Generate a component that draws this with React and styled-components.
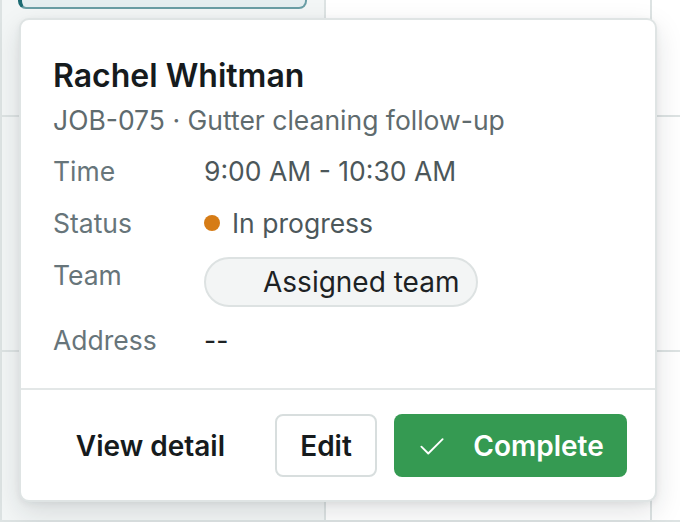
import React from "react";
import styled, { createGlobalStyle } from "styled-components";

const GlobalStyle = createGlobalStyle`
  html, body {
    margin: 0;
    padding: 0;
    background: #ffffff;
    font-family: Inter, "Noto Sans", sans-serif;
    -webkit-font-smoothing: antialiased;
  }
  * {
    box-sizing: border-box;
  }
`;

const job = {
  customer: "Rachel Whitman",
  code: "JOB-075",
  title: "Gutter cleaning follow-up",
  time: "9:00 AM - 10:30 AM",
  status: "In progress",
  team: "Assigned team",
  address: "--",
};

export default function App() {
  return (
    <>
      <GlobalStyle />
      <Stage>
        <CalendarGrid>
          <DayCell $tinted>
            <EventChip />
          </DayCell>
          <DayCell />
          <DayCell $last />
          <DayCell $tinted />
          <DayCell />
          <DayCell $last />
          <DayCell $tinted />
          <DayCell />
          <DayCell $last />
        </CalendarGrid>

        <Popover>
          <Body>
            <Customer>{job.customer}</Customer>
            <Subtitle>
              {job.code} · {job.title}
            </Subtitle>
            <Details>
              <Label>Time</Label>
              <Value>{job.time}</Value>

              <Label>Status</Label>
              <Value>
                <StatusDot />
                {job.status}
              </Value>

              <Label>Team</Label>
              <Value>
                <TeamPill>{job.team}</TeamPill>
              </Value>

              <Label>Address</Label>
              <Value $strong>{job.address}</Value>
            </Details>
          </Body>

          <Footer>
            <GhostButton>View detail</GhostButton>
            <OutlineButton>Edit</OutlineButton>
            <PrimaryButton>
              <svg width="30" height="30" viewBox="0 0 24 24" fill="none">
                <path
                  d="M3.5 12.5l5.5 5.5L20.5 6.5"
                  stroke="currentColor"
                  strokeWidth="1.5"
                  strokeLinecap="round"
                  strokeLinejoin="round"
                />
              </svg>
              Complete
            </PrimaryButton>
          </Footer>
        </Popover>
      </Stage>
    </>
  );
}

const Stage = styled.div`
  position: relative;
  width: 680px;
  height: 522px;
  overflow: hidden;
`;

const CalendarGrid = styled.div`
  display: grid;
  grid-template-columns: 324px 326px 1fr;
  grid-template-rows: 117px 235px 1fr;
  height: 100%;
  border-left: 2px solid #dde3e3;
`;

const DayCell = styled.div`
  position: relative;
  background: ${(p) => (p.$tinted ? "#f3f6f6" : "#ffffff")};
  border-right: ${(p) => (p.$last ? "none" : "2px solid #dde3e3")};
  border-bottom: 2px solid #dde3e3;
`;

const EventChip = styled.div`
  position: absolute;
  left: 16px;
  right: 17px;
  top: -20px;
  height: 29px;
  background: #e5eef0;
  border: 2px solid #6a9ea5;
  border-left: 4px solid #1c6a72;
  border-radius: 8px;
`;

const Popover = styled.div`
  position: absolute;
  left: 19px;
  top: 18px;
  width: 638px;
  height: 484px;
  display: flex;
  flex-direction: column;
  background: #ffffff;
  border: 2px solid #dfe4e4;
  border-radius: 10px;
  box-shadow: 0 10px 28px rgba(20, 30, 35, 0.13), 0 2px 6px rgba(20, 30, 35, 0.06);
`;

const Body = styled.div`
  flex: 1;
  padding: 36px 32px 0;
`;

const Customer = styled.div`
  font-size: 32px;
  font-weight: 600;
  line-height: 40px;
  color: #161b1d;
`;

const Subtitle = styled.div`
  margin-top: 7px;
  font-size: 26.5px;
  line-height: 34px;
  color: #5f6b6e;
`;

const Details = styled.div`
  display: grid;
  grid-template-columns: 151px 1fr;
  row-gap: 18px;
  align-items: start;
  margin-top: 17px;
`;

const Label = styled.div`
  font-size: 26.5px;
  line-height: 34px;
  color: #67757a;
`;

const Value = styled.div`
  display: flex;
  align-items: center;
  gap: 12px;
  min-height: 34px;
  font-size: 26.5px;
  line-height: 34px;
  color: ${(p) => (p.$strong ? "#1d2224" : "#4c575a")};
`;

const StatusDot = styled.span`
  width: 16px;
  height: 16px;
  border-radius: 50%;
  background: #d67c16;
`;

const TeamPill = styled.span`
  display: inline-flex;
  align-items: center;
  height: 50px;
  margin: -1px 0 -2px;
  padding: 0 17px 0 57px;
  border-radius: 999px;
  background: #f3f5f5;
  border: 2px solid #dde2e2;
  color: #1d2224;
  font-size: 28px;
`;

const Footer = styled.div`
  display: flex;
  align-items: center;
  justify-content: flex-end;
  gap: 17px;
  padding: 24px 28px 23px 30px;
  border-top: 2px solid #e3e7e7;
`;

const ButtonBase = styled.button`
  height: 63px;
  display: inline-flex;
  align-items: center;
  justify-content: center;
  white-space: nowrap;
  font-family: Inter, "Noto Sans", sans-serif;
  font-size: 28px;
  font-weight: 600;
  border-radius: 8px;
  cursor: pointer;
`;

const GhostButton = styled(ButtonBase)`
  padding: 0 24px;
  background: transparent;
  border: none;
  color: #161b1d;
  margin-right: 9px;
`;

const OutlineButton = styled(ButtonBase)`
  width: 102px;
  background: #ffffff;
  border: 2px solid #d8dede;
  color: #161b1d;
`;

const PrimaryButton = styled(ButtonBase)`
  width: 233px;
  gap: 26px;
  background: #359a52;
  border: none;
  color: #ffffff;
`;
